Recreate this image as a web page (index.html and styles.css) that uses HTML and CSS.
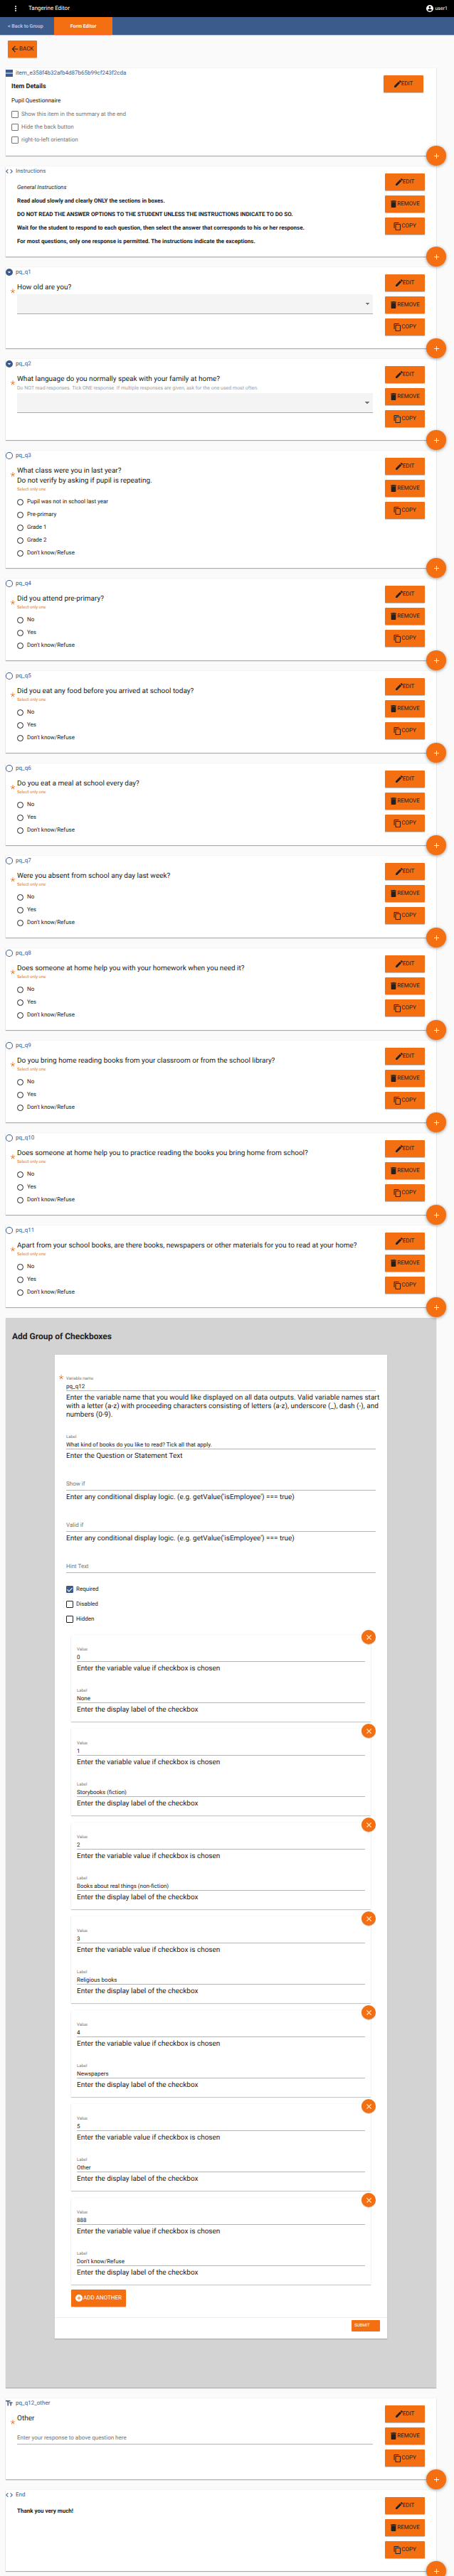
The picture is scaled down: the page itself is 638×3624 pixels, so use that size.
FILE: index.html
```html
<!DOCTYPE html>
<html lang="en">
<head>
<meta charset="utf-8">
<meta name="viewport" content="width=device-width, initial-scale=1">
<title>Tangerine Editor</title>
<link rel="stylesheet" href="styles.css">
</head>
<body>
<svg class="sprite" aria-hidden="true">
  <symbol id="i-more" viewBox="0 0 24 24"><path d="M12 8a2 2 0 1 0 0-4 2 2 0 0 0 0 4zm0 2a2 2 0 1 0 0 4 2 2 0 0 0 0-4zm0 6a2 2 0 1 0 0 4 2 2 0 0 0 0-4z"/></symbol>
  <symbol id="i-user" viewBox="2 2 20 20"><path d="M12 2a10 10 0 1 0 0 20 10 10 0 0 0 0-20zm0 3a3 3 0 1 1 0 6 3 3 0 0 1 0-6zm0 14.2a7.2 7.2 0 0 1-6-3.22c.03-1.99 4-3.08 6-3.08s5.97 1.09 6 3.08a7.2 7.2 0 0 1-6 3.22z"/></symbol>
  <symbol id="i-back" viewBox="3 3 18 18"><path d="M20 11H7.83l5.59-5.59L12 4l-8 8 8 8 1.41-1.41L7.83 13H20v-2z"/></symbol>
  <symbol id="i-edit" viewBox="3 3 18 18"><path d="M3 17.25V21h3.75L17.81 9.94l-3.75-3.75L3 17.25zM20.71 7.04a1 1 0 0 0 0-1.41l-2.34-2.34a1 1 0 0 0-1.41 0l-1.83 1.83 3.75 3.75 1.83-1.83z"/></symbol>
  <symbol id="i-trash" viewBox="3 3 18 18"><path d="M6 19c0 1.1.9 2 2 2h8a2 2 0 0 0 2-2V7H6v12zM19 4h-3.5l-1-1h-5l-1 1H5v2h14V4z"/></symbol>
  <symbol id="i-copy" viewBox="1 1 22 22"><path d="M16 1H4a2 2 0 0 0-2 2v14h2V3h12V1zm3 4H8a2 2 0 0 0-2 2v14c0 1.1.9 2 2 2h11a2 2 0 0 0 2-2V7a2 2 0 0 0-2-2zm0 16H8V7h11v14z"/></symbol>
  <symbol id="i-plus" viewBox="5 5 14 14"><path d="M19 13h-6v6h-2v-6H5v-2h6V5h2v6h6v2z"/></symbol>
  <symbol id="i-close" viewBox="5 5 14 14"><path d="M19 6.41 17.59 5 12 10.59 6.41 5 5 6.41 10.59 12 5 17.59 6.41 19 12 13.41 17.59 19 19 17.59 13.41 12z"/></symbol>
  <symbol id="i-addc" viewBox="2 2 20 20"><path d="M12 2a10 10 0 1 0 0 20 10 10 0 0 0 0-20zm5 11h-4v4h-2v-4H7v-2h4V7h2v4h4v2z"/></symbol>
  <symbol id="i-section" viewBox="3 3 18 18"><path d="M3 3h18v8H3zM3 13h18v8H3z"/></symbol>
  <symbol id="i-code" viewBox="2 2 20 20"><path d="M9.4 16.6 4.8 12l4.6-4.6L8 6l-6 6 6 6 1.4-1.4zm5.2 0 4.6-4.6-4.6-4.6L16 6l6 6-6 6-1.4-1.4z"/></symbol>
  <symbol id="i-drop" viewBox="2 2 20 20"><path d="M12 2a10 10 0 1 0 0 20 10 10 0 0 0 0-20zM7.5 10h9L12 14.5z"/></symbol>
  <symbol id="i-ring" viewBox="2 2 20 20"><path d="M12 2a10 10 0 1 0 0 20 10 10 0 0 0 0-20zm0 18a8 8 0 1 1 0-16 8 8 0 0 1 0 16z"/></symbol>
  <symbol id="i-text" viewBox="2 3 20 18"><path d="M2 4v3h5v12h3V7h5V4H2zm19 5h-9v3h3v7h3v-7h3V9z"/></symbol>
  <symbol id="i-star" viewBox="0 0 24 24"><path d="M10.7 1h2.6v8l7.6-2.5.8 2.5-7.6 2.5 4.7 6.4-2.1 1.5L12 13l-4.7 6.4-2.1-1.5 4.7-6.4L2.3 9l.8-2.5L10.7 9z"/></symbol>
</svg>

<header class="topbar">
  <button class="icon-btn" aria-label="Menu"><svg class="ic"><use href="#i-more"/></svg></button>
  <span class="brand">Tangerine Editor</span>
  <button class="user"><svg class="ic"><use href="#i-user"/></svg>user1</button>
</header>
<nav class="tabs">
  <a class="tab" href="#group">&lt; Back to Group</a>
  <a class="tab tab-active" href="#form">Form Editor</a>
</nav>

<main class="page">
  <button class="btn btn-back"><svg class="ic"><use href="#i-back"/></svg>BACK</button>

  <section class="item item-details">
    <div class="item-id"><svg class="ic"><use href="#i-section"/></svg>item_e358f4b32afb4d87b65b99cf243f2cda</div>
    <div class="details">
      <h2>Item Details</h2>
      <p>Pupil Questionnaire</p>
      <label class="check muted"><input type="checkbox">Show this item in the summary at the end</label>
      <label class="check muted"><input type="checkbox">Hide the back button</label>
      <label class="check muted"><input type="checkbox">right-to-left orientation</label>
    </div>
    <div class="actions"><button class="btn"><svg class="ic"><use href="#i-edit"/></svg>EDIT</button></div>
    <button class="fab" aria-label="Add item"><svg class="ic"><use href="#i-plus"/></svg></button>
  </section>

  <section class="item">
    <div class="item-id"><svg class="ic"><use href="#i-code"/></svg>Instructions</div>
    <div class="prose">
      <p><em>General Instructions</em></p>
      <p><b>Read aloud slowly and clearly ONLY the sections in boxes.</b></p>
      <p><b>DO NOT READ THE ANSWER OPTIONS TO THE STUDENT UNLESS THE INSTRUCTIONS INDICATE TO DO SO.</b></p>
      <p><b>Wait for the student to respond to each question, then select the answer that corresponds to his or her response.</b></p>
      <p><b>For most questions, only one response is permitted. The instructions indicate the exceptions.</b></p>
    </div>
    <div class="actions"><button class="btn"><svg class="ic"><use href="#i-edit"/></svg>EDIT</button><button class="btn"><svg class="ic"><use href="#i-trash"/></svg>REMOVE</button><button class="btn"><svg class="ic ic-lg"><use href="#i-copy"/></svg>COPY</button></div>
    <button class="fab" aria-label="Add item"><svg class="ic"><use href="#i-plus"/></svg></button>
  </section>

  <section class="item">
    <div class="item-id"><svg class="ic"><use href="#i-drop"/></svg>pq_q1</div>
    <div class="question">
      <svg class="star"><use href="#i-star"/></svg>
      <label class="q" for="q1">How old are you?</label>
      <select id="q1"><option></option></select>
    </div>
    <div class="actions"><button class="btn"><svg class="ic"><use href="#i-edit"/></svg>EDIT</button><button class="btn"><svg class="ic"><use href="#i-trash"/></svg>REMOVE</button><button class="btn"><svg class="ic ic-lg"><use href="#i-copy"/></svg>COPY</button></div>
    <button class="fab" aria-label="Add item"><svg class="ic"><use href="#i-plus"/></svg></button>
  </section>

  <section class="item">
    <div class="item-id"><svg class="ic"><use href="#i-drop"/></svg>pq_q2</div>
    <div class="question">
      <svg class="star"><use href="#i-star"/></svg>
      <label class="q" for="q2">What language do you normally speak with your family at home?</label>
      <div class="hint">Do NOT read responses. Tick ONE response. If multiple responses are given, ask for the one used most often.</div>
      <select id="q2"><option></option></select>
    </div>
    <div class="actions"><button class="btn"><svg class="ic"><use href="#i-edit"/></svg>EDIT</button><button class="btn"><svg class="ic"><use href="#i-trash"/></svg>REMOVE</button><button class="btn"><svg class="ic ic-lg"><use href="#i-copy"/></svg>COPY</button></div>
    <button class="fab" aria-label="Add item"><svg class="ic"><use href="#i-plus"/></svg></button>
  </section>

  <section class="item">
    <div class="item-id"><svg class="ic"><use href="#i-ring"/></svg>pq_q3</div>
    <fieldset class="question">
      <svg class="star"><use href="#i-star"/></svg>
      <div class="q">What class were you in last year?<br>Do not verify by asking if pupil is repeating.</div>
      <div class="hint hint-warn">Select only one</div>
      <label class="radio"><input type="radio" name="q3">Pupil was not in school last year</label>
      <label class="radio"><input type="radio" name="q3">Pre-primary</label>
      <label class="radio"><input type="radio" name="q3">Grade 1</label>
      <label class="radio"><input type="radio" name="q3">Grade 2</label>
      <label class="radio"><input type="radio" name="q3">Don't know/Refuse</label>
    </fieldset>
    <div class="actions"><button class="btn"><svg class="ic"><use href="#i-edit"/></svg>EDIT</button><button class="btn"><svg class="ic"><use href="#i-trash"/></svg>REMOVE</button><button class="btn"><svg class="ic ic-lg"><use href="#i-copy"/></svg>COPY</button></div>
    <button class="fab" aria-label="Add item"><svg class="ic"><use href="#i-plus"/></svg></button>
  </section>

  <section class="item">
    <div class="item-id"><svg class="ic"><use href="#i-ring"/></svg>pq_q4</div>
    <fieldset class="question">
      <svg class="star"><use href="#i-star"/></svg>
      <div class="q">Did you attend pre-primary?</div>
      <div class="hint hint-warn">Select only one</div>
      <label class="radio"><input type="radio" name="q4">No</label>
      <label class="radio"><input type="radio" name="q4">Yes</label>
      <label class="radio"><input type="radio" name="q4">Don't know/Refuse</label>
    </fieldset>
    <div class="actions"><button class="btn"><svg class="ic"><use href="#i-edit"/></svg>EDIT</button><button class="btn"><svg class="ic"><use href="#i-trash"/></svg>REMOVE</button><button class="btn"><svg class="ic ic-lg"><use href="#i-copy"/></svg>COPY</button></div>
    <button class="fab" aria-label="Add item"><svg class="ic"><use href="#i-plus"/></svg></button>
  </section>

  <section class="item">
    <div class="item-id"><svg class="ic"><use href="#i-ring"/></svg>pq_q5</div>
    <fieldset class="question">
      <svg class="star"><use href="#i-star"/></svg>
      <div class="q">Did you eat any food before you arrived at school today?</div>
      <div class="hint hint-warn">Select only one</div>
      <label class="radio"><input type="radio" name="q5">No</label>
      <label class="radio"><input type="radio" name="q5">Yes</label>
      <label class="radio"><input type="radio" name="q5">Don't know/Refuse</label>
    </fieldset>
    <div class="actions"><button class="btn"><svg class="ic"><use href="#i-edit"/></svg>EDIT</button><button class="btn"><svg class="ic"><use href="#i-trash"/></svg>REMOVE</button><button class="btn"><svg class="ic ic-lg"><use href="#i-copy"/></svg>COPY</button></div>
    <button class="fab" aria-label="Add item"><svg class="ic"><use href="#i-plus"/></svg></button>
  </section>

  <section class="item">
    <div class="item-id"><svg class="ic"><use href="#i-ring"/></svg>pq_q6</div>
    <fieldset class="question">
      <svg class="star"><use href="#i-star"/></svg>
      <div class="q">Do you eat a meal at school every day?</div>
      <div class="hint hint-warn">Select only one</div>
      <label class="radio"><input type="radio" name="q6">No</label>
      <label class="radio"><input type="radio" name="q6">Yes</label>
      <label class="radio"><input type="radio" name="q6">Don't know/Refuse</label>
    </fieldset>
    <div class="actions"><button class="btn"><svg class="ic"><use href="#i-edit"/></svg>EDIT</button><button class="btn"><svg class="ic"><use href="#i-trash"/></svg>REMOVE</button><button class="btn"><svg class="ic ic-lg"><use href="#i-copy"/></svg>COPY</button></div>
    <button class="fab" aria-label="Add item"><svg class="ic"><use href="#i-plus"/></svg></button>
  </section>

  <section class="item">
    <div class="item-id"><svg class="ic"><use href="#i-ring"/></svg>pq_q7</div>
    <fieldset class="question">
      <svg class="star"><use href="#i-star"/></svg>
      <div class="q">Were you absent from school any day last week?</div>
      <div class="hint hint-warn">Select only one</div>
      <label class="radio"><input type="radio" name="q7">No</label>
      <label class="radio"><input type="radio" name="q7">Yes</label>
      <label class="radio"><input type="radio" name="q7">Don't know/Refuse</label>
    </fieldset>
    <div class="actions"><button class="btn"><svg class="ic"><use href="#i-edit"/></svg>EDIT</button><button class="btn"><svg class="ic"><use href="#i-trash"/></svg>REMOVE</button><button class="btn"><svg class="ic ic-lg"><use href="#i-copy"/></svg>COPY</button></div>
    <button class="fab" aria-label="Add item"><svg class="ic"><use href="#i-plus"/></svg></button>
  </section>

  <section class="item">
    <div class="item-id"><svg class="ic"><use href="#i-ring"/></svg>pq_q8</div>
    <fieldset class="question">
      <svg class="star"><use href="#i-star"/></svg>
      <div class="q">Does someone at home help you with your homework when you need it?</div>
      <div class="hint hint-warn">Select only one</div>
      <label class="radio"><input type="radio" name="q8">No</label>
      <label class="radio"><input type="radio" name="q8">Yes</label>
      <label class="radio"><input type="radio" name="q8">Don't know/Refuse</label>
    </fieldset>
    <div class="actions"><button class="btn"><svg class="ic"><use href="#i-edit"/></svg>EDIT</button><button class="btn"><svg class="ic"><use href="#i-trash"/></svg>REMOVE</button><button class="btn"><svg class="ic ic-lg"><use href="#i-copy"/></svg>COPY</button></div>
    <button class="fab" aria-label="Add item"><svg class="ic"><use href="#i-plus"/></svg></button>
  </section>

  <section class="item">
    <div class="item-id"><svg class="ic"><use href="#i-ring"/></svg>pq_q9</div>
    <fieldset class="question">
      <svg class="star"><use href="#i-star"/></svg>
      <div class="q">Do you bring home reading books from your classroom or from the school library?</div>
      <div class="hint hint-warn">Select only one</div>
      <label class="radio"><input type="radio" name="q9">No</label>
      <label class="radio"><input type="radio" name="q9">Yes</label>
      <label class="radio"><input type="radio" name="q9">Don't know/Refuse</label>
    </fieldset>
    <div class="actions"><button class="btn"><svg class="ic"><use href="#i-edit"/></svg>EDIT</button><button class="btn"><svg class="ic"><use href="#i-trash"/></svg>REMOVE</button><button class="btn"><svg class="ic ic-lg"><use href="#i-copy"/></svg>COPY</button></div>
    <button class="fab" aria-label="Add item"><svg class="ic"><use href="#i-plus"/></svg></button>
  </section>

  <section class="item">
    <div class="item-id"><svg class="ic"><use href="#i-ring"/></svg>pq_q10</div>
    <fieldset class="question">
      <svg class="star"><use href="#i-star"/></svg>
      <div class="q">Does someone at home help you to practice reading the books you bring home from school?</div>
      <div class="hint hint-warn">Select only one</div>
      <label class="radio"><input type="radio" name="q10">No</label>
      <label class="radio"><input type="radio" name="q10">Yes</label>
      <label class="radio"><input type="radio" name="q10">Don't know/Refuse</label>
    </fieldset>
    <div class="actions"><button class="btn"><svg class="ic"><use href="#i-edit"/></svg>EDIT</button><button class="btn"><svg class="ic"><use href="#i-trash"/></svg>REMOVE</button><button class="btn"><svg class="ic ic-lg"><use href="#i-copy"/></svg>COPY</button></div>
    <button class="fab" aria-label="Add item"><svg class="ic"><use href="#i-plus"/></svg></button>
  </section>

  <section class="item">
    <div class="item-id"><svg class="ic"><use href="#i-ring"/></svg>pq_q11</div>
    <fieldset class="question">
      <svg class="star"><use href="#i-star"/></svg>
      <div class="q">Apart from your school books, are there books, newspapers or other materials for you to read at your home?</div>
      <div class="hint hint-warn">Select only one</div>
      <label class="radio"><input type="radio" name="q11">No</label>
      <label class="radio"><input type="radio" name="q11">Yes</label>
      <label class="radio"><input type="radio" name="q11">Don't know/Refuse</label>
    </fieldset>
    <div class="actions"><button class="btn"><svg class="ic"><use href="#i-edit"/></svg>EDIT</button><button class="btn"><svg class="ic"><use href="#i-trash"/></svg>REMOVE</button><button class="btn"><svg class="ic ic-lg"><use href="#i-copy"/></svg>COPY</button></div>
    <button class="fab" aria-label="Add item"><svg class="ic"><use href="#i-plus"/></svg></button>
  </section>

  <section class="editor">
    <h1>Add Group of Checkboxes</h1>
    <form class="form">
      <div class="form-body">
        <div class="field">
          <svg class="star"><use href="#i-star"/></svg>
          <label for="f-name">Variable name</label>
          <input id="f-name" type="text" value="pq_q12">
          <p class="wide">Enter the variable name that you would like displayed on all data outputs. Valid variable names start with a letter (a-z) with proceeding characters consisting of letters (a-z), underscore (_), dash (-), and numbers (0-9).</p>
        </div>
        <div class="field">
          <label for="f-label">Label</label>
          <input id="f-label" type="text" value="What kind of books do you like to read? Tick all that apply.">
          <p>Enter the Question or Statement Text</p>
        </div>
        <div class="field field-empty">
          <input id="f-show" type="text" aria-label="Show if" placeholder="Show if">
          <p>Enter any conditional display logic. (e.g. getValue('isEmployee') === true)</p>
        </div>
        <div class="field field-empty">
          <input id="f-valid" type="text" aria-label="Valid if" placeholder="Valid if">
          <p>Enter any conditional display logic. (e.g. getValue('isEmployee') === true)</p>
        </div>
        <div class="field field-empty">
          <input id="f-hint" type="text" aria-label="Hint Text" placeholder="Hint Text">
        </div>
        <div class="flags">
          <label class="check"><input type="checkbox" checked>Required</label>
          <label class="check"><input type="checkbox">Disabled</label>
          <label class="check"><input type="checkbox">Hidden</label>
        </div>
        <div class="options">
          <div class="option">
            <button type="button" class="close" aria-label="Remove option"><svg class="ic"><use href="#i-close"/></svg></button>
            <div class="field"><label for="v0">Value</label><input id="v0" type="text" value="0"><p>Enter the variable value if checkbox is chosen</p></div>
            <div class="field"><label for="l0">Label</label><input id="l0" type="text" value="None"><p>Enter the display label of the checkbox</p></div>
          </div>
          <div class="option">
            <button type="button" class="close" aria-label="Remove option"><svg class="ic"><use href="#i-close"/></svg></button>
            <div class="field"><label for="v1">Value</label><input id="v1" type="text" value="1"><p>Enter the variable value if checkbox is chosen</p></div>
            <div class="field"><label for="l1">Label</label><input id="l1" type="text" value="Storybooks (fiction)"><p>Enter the display label of the checkbox</p></div>
          </div>
          <div class="option">
            <button type="button" class="close" aria-label="Remove option"><svg class="ic"><use href="#i-close"/></svg></button>
            <div class="field"><label for="v2">Value</label><input id="v2" type="text" value="2"><p>Enter the variable value if checkbox is chosen</p></div>
            <div class="field"><label for="l2">Label</label><input id="l2" type="text" value="Books about real things (non-fiction)"><p>Enter the display label of the checkbox</p></div>
          </div>
          <div class="option">
            <button type="button" class="close" aria-label="Remove option"><svg class="ic"><use href="#i-close"/></svg></button>
            <div class="field"><label for="v3">Value</label><input id="v3" type="text" value="3"><p>Enter the variable value if checkbox is chosen</p></div>
            <div class="field"><label for="l3">Label</label><input id="l3" type="text" value="Religious books"><p>Enter the display label of the checkbox</p></div>
          </div>
          <div class="option">
            <button type="button" class="close" aria-label="Remove option"><svg class="ic"><use href="#i-close"/></svg></button>
            <div class="field"><label for="v4">Value</label><input id="v4" type="text" value="4"><p>Enter the variable value if checkbox is chosen</p></div>
            <div class="field"><label for="l4">Label</label><input id="l4" type="text" value="Newspapers"><p>Enter the display label of the checkbox</p></div>
          </div>
          <div class="option">
            <button type="button" class="close" aria-label="Remove option"><svg class="ic"><use href="#i-close"/></svg></button>
            <div class="field"><label for="v5">Value</label><input id="v5" type="text" value="5"><p>Enter the variable value if checkbox is chosen</p></div>
            <div class="field"><label for="l5">Label</label><input id="l5" type="text" value="Other"><p>Enter the display label of the checkbox</p></div>
          </div>
          <div class="option">
            <button type="button" class="close" aria-label="Remove option"><svg class="ic"><use href="#i-close"/></svg></button>
            <div class="field"><label for="v6">Value</label><input id="v6" type="text" value="888"><p>Enter the variable value if checkbox is chosen</p></div>
            <div class="field"><label for="l6">Label</label><input id="l6" type="text" value="Don't know/Refuse"><p>Enter the display label of the checkbox</p></div>
          </div>
        </div>
        <button type="button" class="btn btn-add"><svg class="ic"><use href="#i-addc"/></svg>ADD ANOTHER</button>
      </div>
      <div class="form-foot"><button type="button" class="submit">SUBMIT</button></div>
    </form>
  </section>

  <section class="item">
    <div class="item-id"><svg class="ic"><use href="#i-text"/></svg>pq_q12_other</div>
    <div class="question">
      <svg class="star"><use href="#i-star"/></svg>
      <label class="q" for="other">Other</label>
      <input id="other" class="answer" type="text" placeholder="Enter your response to above question here">
    </div>
    <div class="actions"><button class="btn"><svg class="ic"><use href="#i-edit"/></svg>EDIT</button><button class="btn"><svg class="ic"><use href="#i-trash"/></svg>REMOVE</button><button class="btn"><svg class="ic ic-lg"><use href="#i-copy"/></svg>COPY</button></div>
    <button class="fab" aria-label="Add item"><svg class="ic"><use href="#i-plus"/></svg></button>
  </section>

  <section class="item">
    <div class="item-id"><svg class="ic"><use href="#i-code"/></svg>End</div>
    <div class="prose"><p><b>Thank you very much!</b></p></div>
    <div class="actions"><button class="btn"><svg class="ic"><use href="#i-edit"/></svg>EDIT</button><button class="btn"><svg class="ic"><use href="#i-trash"/></svg>REMOVE</button><button class="btn"><svg class="ic ic-lg"><use href="#i-copy"/></svg>COPY</button></div>
    <button class="fab" aria-label="Add item"><svg class="ic"><use href="#i-plus"/></svg></button>
  </section>
</main>
</body>
</html>
```

FILE: styles.css
```css
:root {
  --orange: #f36f11;
  --blue: #3c5b8d;
  --ink: #212121;
  --line: #b5b5b5;
}

* { box-sizing: border-box; }

body {
  margin: 0;
  background: #fafafa;
  color: var(--ink);
  font: 8px/12px Roboto, "Liberation Sans", sans-serif;
  text-rendering: geometricPrecision;
  overflow-x: hidden;
}

h1, h2, p, fieldset { margin: 0; padding: 0; border: 0; }
button, input, select { font: inherit; color: inherit; text-rendering: inherit; border: 0; padding: 0; margin: 0; }
button { cursor: pointer; }

.sprite { display: none; }
.ic { width: 10px; height: 10px; fill: currentColor; flex: none; }
.ic-lg { width: 11px; height: 11px; }

.topbar {
  display: flex;
  align-items: center;
  height: 24px;
  padding: 0 9px 0 16px;
  background: #000;
  color: #fff;
}
.icon-btn, .user { display: flex; align-items: center; background: none; color: #fff; }
.icon-btn .ic { width: 12px; height: 12px; }
.brand { margin-left: 12px; }
.user { gap: 3px; margin-left: auto; font-size: 7px; }

.tabs {
  display: flex;
  height: 25px;
  background: var(--blue);
  box-shadow: 0 1px 1px rgba(0, 0, 0, .2);
  font-size: 7px;
  font-weight: 700;
}
.tab {
  display: flex;
  align-items: center;
  padding: 0 15px 0 11px;
  color: #b5c1d5;
  text-decoration: none;
}
.tab-active {
  padding: 1px 23px 0;
  background: var(--orange);
  border-bottom: 1px solid #ff5722;
  color: #fff;
}

.page {
  display: flex;
  flex-direction: column;
  gap: 15px;
  padding: 8px 25px 8px 8px;
}

.btn {
  display: flex;
  align-items: center;
  justify-content: center;
  height: 24px;
  background: var(--orange);
  border-radius: 1px;
  box-shadow: 0 1px 1px rgba(0, 0, 0, .25);
  color: var(--ink);
}
.btn-back { align-self: flex-start; gap: 1px; margin-left: 3px; padding: 0 5px; }

.item {
  position: relative;
  display: grid;
  grid-template-columns: 1fr 56px;
  grid-template-rows: auto 1fr;
  column-gap: 17px;
  min-height: 114px;
  padding-right: 16px;
  background: #fff;
  box-shadow: 0 1px 1px rgba(0, 0, 0, .3), 0 0 1px rgba(0, 0, 0, .12);
}
.item-id {
  display: flex;
  align-items: center;
  gap: 4px;
  height: 13px;
  color: var(--blue);
}
.actions {
  grid-column: 2;
  grid-row: 1 / 3;
  display: flex;
  flex-direction: column;
  gap: 7px;
  padding-top: 10px;
}
.fab {
  position: absolute;
  right: -14px;
  bottom: -14px;
  display: grid;
  place-items: center;
  width: 28px;
  height: 28px;
  border-radius: 50%;
  background: var(--orange);
  box-shadow: 0 1px 4px rgba(0, 0, 0, .4);
  color: #fff;
  z-index: 1;
}
.fab .ic { width: 7px; height: 7px; }

.item-details { padding-right: 18px; }
.details { padding: 6px 0 13px 8px; }
.details h2 { font-size: 9px; line-height: 14px; }
.details p { margin: 7px 0 4px; }

.check { display: flex; align-items: center; gap: 4px; height: 21px; }
.muted { height: 18px; color: #757575; }
.check input {
  appearance: none;
  display: grid;
  place-items: center;
  width: 10px;
  height: 10px;
  border: 1px solid currentColor;
  border-radius: 1px;
}
.check input:checked { background: var(--blue); border-color: var(--blue); }
.check input:checked::after {
  content: "";
  width: 3px;
  height: 6px;
  border: solid #fff;
  border-width: 0 1px 1px 0;
  rotate: 45deg;
}

.prose { padding: 7px 0 12px 16px; }
.prose p { line-height: 19px; }

.question { position: relative; padding: 9px 0 12px 16px; min-width: 0; }
.star { position: absolute; left: 6px; top: 17px; width: 8px; height: 8px; fill: var(--orange); }
.q { display: block; font-size: 10px; line-height: 14px; }
.hint { height: 10px; color: #9e9e9e; font-size: 7px; line-height: 10px; }
.hint-warn { margin-bottom: 3px; color: var(--orange); font-size: 6px; }
.radio { display: flex; align-items: center; gap: 5px; height: 18px; }
.radio input {
  appearance: none;
  width: 9px;
  height: 9px;
  border: 1px solid var(--ink);
  border-radius: 50%;
}

select {
  appearance: none;
  display: block;
  width: 100%;
  height: 28px;
  margin-top: 2px;
  border-bottom: 1px solid #aaa;
  background:
    linear-gradient(to bottom right, #757575 50%, transparent 50%) right 5px center / 3px 3px no-repeat,
    linear-gradient(to bottom left, #757575 50%, transparent 50%) right 8px center / 3px 3px no-repeat,
    #f4f4f4;
}

.answer {
  width: 100%;
  height: 18px;
  margin-top: 11px;
  border-bottom: 1px solid var(--line);
  background: none;
}
input::placeholder { color: #757575; opacity: 1; }

.editor {
  padding: 18px 69px 69px;
  background: #d3d3d3;
  box-shadow: 0 1px 1px rgba(0, 0, 0, .3);
}
.editor h1 { margin: 0 0 18px -60px; font-size: 12px; line-height: 16px; }

.form { background: #fff; box-shadow: 0 1px 1px rgba(0, 0, 0, .2); }
.form-body { padding: 30px 16px 15px; }
.field { position: relative; }
.field + .field { margin-top: 21px; }
.field label { display: block; height: 8px; color: #757575; font-size: 6px; line-height: 8px; }
.field input {
  display: block;
  width: 100%;
  height: 13px;
  border-bottom: 1px solid var(--line);
  background: none;
}
.field-empty input { height: 21px; padding-top: 2px; }
.field p { padding-top: 4px; font-size: 10px; line-height: 12px; }
.field .wide { margin-right: -12px; }
.field .star { left: -11px; top: -2px; }

.flags { padding: 12px 0; }
.options { display: grid; gap: 10px; padding: 0 7px; }
.option {
  position: relative;
  padding: 17px 8px 10px;
  box-shadow: 0 1px 1px rgba(0, 0, 0, .2), 0 0 1px rgba(0, 0, 0, .12);
}
.close {
  position: absolute;
  right: -7px;
  top: -7px;
  display: grid;
  place-items: center;
  width: 20px;
  height: 20px;
  border-radius: 50%;
  background: var(--orange);
  box-shadow: 0 1px 1px rgba(0, 0, 0, .2);
  color: #fff;
  z-index: 1;
}
.close .ic { width: 7px; height: 7px; }

.btn-add { gap: 1px; margin: 7px 0 0 7px; padding: 0 6px; color: #fff; }

.form-foot {
  display: flex;
  justify-content: flex-end;
  padding: 3px 10px 10px;
  border-top: 1px solid #eee;
}
.submit {
  width: 40px;
  height: 16px;
  padding-left: 4px;
  border-radius: 1px;
  background: var(--orange);
  color: #fff;
  font-size: 6px;
  text-align: left;
}
```
